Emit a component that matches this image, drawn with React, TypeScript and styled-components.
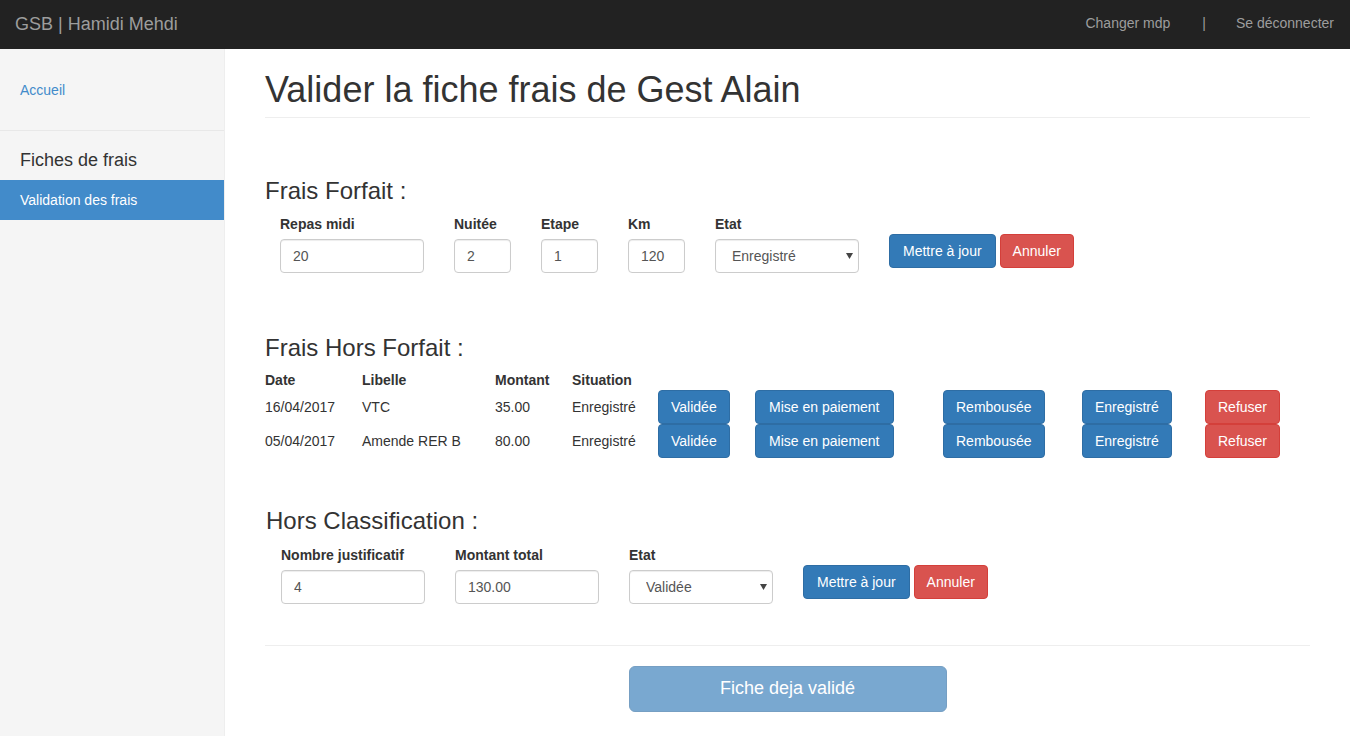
import React from "react";
import styled, { createGlobalStyle } from "styled-components";

const GlobalStyle = createGlobalStyle`
  *, *::before, *::after { box-sizing: border-box; }
  html, body { margin: 0; padding: 0; background: #fff; }
  body {
    font-family: "Liberation Sans", Arial, Helvetica, sans-serif;
    font-size: 14px;
    line-height: 1.42857;
    color: #333;
  }
`;

const Page = styled.div`
  display: flex;
  flex-direction: column;
  min-height: 736px;
`;

const Navbar = styled.header`
  height: 49px;
  background: #222;
  display: flex;
  align-items: center;
  justify-content: space-between;
  padding: 0 16px 0 15px;
  flex-shrink: 0;
`;

const Brand = styled.div`
  font-size: 18px;
  color: #9d9d9d;
  line-height: 20px;
  margin-top: -2px;
`;

const NavLinks = styled.nav`
  display: flex;
  align-items: center;
  color: #9d9d9d;
  font-size: 14px;
  margin-top: -1px;
`;

const NavLink = styled.span`
  color: #9d9d9d;
`;

const NavSep = styled.span`
  color: #9d9d9d;
  margin: 0 30px 0 32px;
`;

const Body = styled.div`
  display: flex;
  flex: 1;
  align-items: stretch;
`;

const Sidebar = styled.aside`
  width: 225px;
  flex-shrink: 0;
  background: #f5f5f5;
  border-right: 1px solid #eee;
  display: flex;
  flex-direction: column;
`;

const SideLinkBlock = styled.div`
  height: 82px;
  padding: 32px 20px 0;
  border-bottom: 1px solid #e8e8e8;
`;

const SideLink = styled.span`
  color: #428bca;
  font-size: 14px;
`;

const SideTitle = styled.div`
  font-size: 18px;
  color: #333;
  padding: 17px 20px 0;
  height: 49px;
  line-height: 24px;
`;

const SideActive = styled.div`
  background: #428bca;
  color: #fff;
  height: 40px;
  width: 224px;
  line-height: 40px;
  padding: 0 20px;
  font-size: 14px;
`;

const Main = styled.main`
  flex: 1;
  padding: 0 40px 0 40px;
`;

const PageHeader = styled.div`
  margin-top: 21px;
  border-bottom: 1px solid #eee;
  padding-bottom: 7px;
`;

const H1 = styled.h1`
  margin: 0;
  font-size: 36px;
  font-weight: 500;
  line-height: 39.6px;
  color: #333;
`;

const H3 = styled.h3<{ $top: number; $indent?: number }>`
  margin: ${(p) => p.$top}px 0 0 ${(p) => p.$indent ?? 0}px;
  font-size: 24px;
  font-weight: 500;
  line-height: 26.4px;
  color: #333;
`;

const FormRow = styled.div<{ $indent: number }>`
  display: flex;
  align-items: flex-start;
  gap: 30px;
  margin-top: 10px;
  padding-left: ${(p) => p.$indent}px;
`;

const Field = styled.div<{ $w: number }>`
  width: ${(p) => p.$w}px;
  display: flex;
  flex-direction: column;
`;

const Label = styled.label`
  font-weight: bold;
  font-size: 14px;
  line-height: 20px;
  margin-bottom: 5px;
  color: #333;
`;

const Input = styled.input`
  height: 34px;
  width: 100%;
  padding: 6px 12px;
  font-family: inherit;
  font-size: 14px;
  color: #555;
  background: #fff;
  border: 1px solid #ccc;
  border-radius: 4px;
  box-shadow: inset 0 1px 1px rgba(0, 0, 0, 0.075);
  outline: none;
`;

const SelectWrap = styled.div`
  position: relative;
  width: 100%;
`;

const Select = styled.select`
  appearance: none;
  -webkit-appearance: none;
  height: 34px;
  width: 100%;
  padding: 6px 12px 6px 16px;
  font-family: inherit;
  font-size: 14px;
  color: #555;
  background: #fff;
  border: 1px solid #ccc;
  border-radius: 4px;
  box-shadow: inset 0 1px 1px rgba(0, 0, 0, 0.075);
  outline: none;
`;

const Arrow = styled.svg`
  position: absolute;
  right: 6px;
  top: 14px;
  width: 7px;
  height: 6px;
  pointer-events: none;
`;

const Actions = styled.div`
  display: flex;
  gap: 4px;
  padding-top: 20px;
`;

const Btn = styled.button<{ $variant: "primary" | "danger"; $wide?: boolean }>`
  height: 34px;
  padding: 6px ${(p) => (p.$wide ? 13 : 12)}px;
  font-family: inherit;
  font-size: 14px;
  line-height: 20px;
  color: #fff;
  border-radius: 4px;
  border: 1px solid ${(p) => (p.$variant === "primary" ? "#2e6da4" : "#d43f3a")};
  background: ${(p) => (p.$variant === "primary" ? "#337ab7" : "#d9534f")};
  white-space: nowrap;
  cursor: pointer;
`;

const Table = styled.div`
  margin-top: 9px;
  display: grid;
  grid-template-columns: 97px 133px 77px 86px 97px 188px 139px 123px 1fr;
`;

const HeadCell = styled.div`
  font-weight: bold;
  height: 20px;
  line-height: 20px;
`;

const Cell = styled.div<{ $text?: boolean }>`
  height: 34px;
  display: flex;
  align-items: center;
  white-space: nowrap;
  padding-top: ${(p) => (p.$text ? 2 : 0)}px;
`;

const Divider = styled.hr`
  margin: 41px 0 0;
  border: 0;
  border-top: 1px solid #eee;
`;

const Footer = styled.div`
  display: flex;
  justify-content: center;
  padding-top: 20px;
  padding-bottom: 20px;
`;

const BigBtn = styled.button`
  width: 318px;
  height: 46px;
  font-family: inherit;
  font-size: 18px;
  color: #fff;
  background: #337ab7;
  border: 1px solid #2e6da4;
  border-radius: 6px;
  opacity: 0.65;
  cursor: not-allowed;
`;

const Caret = () => (
  <Arrow viewBox="0 0 7 6">
    <path d="M0 0 L7 0 L3.5 6 Z" fill="#444" />
  </Arrow>
);

const rows = [
  { date: "16/04/2017", libelle: "VTC", montant: "35.00", situation: "Enregistré" },
  { date: "05/04/2017", libelle: "Amende RER B", montant: "80.00", situation: "Enregistré" },
];

export default function App() {
  return (
    <>
      <GlobalStyle />
      <Page>
        <Navbar>
          <Brand>GSB | Hamidi Mehdi</Brand>
          <NavLinks>
            <NavLink>Changer mdp</NavLink>
            <NavSep>|</NavSep>
            <NavLink>Se déconnecter</NavLink>
          </NavLinks>
        </Navbar>
        <Body>
          <Sidebar>
            <SideLinkBlock>
              <SideLink>Accueil</SideLink>
            </SideLinkBlock>
            <SideTitle>Fiches de frais</SideTitle>
            <SideActive>Validation des frais</SideActive>
          </Sidebar>
          <Main>
            <PageHeader>
              <H1>Valider la fiche frais de Gest Alain</H1>
            </PageHeader>

            <H3 $top={60}>Frais Forfait :</H3>
            <FormRow $indent={15}>
              <Field $w={144}>
                <Label>Repas midi</Label>
                <Input defaultValue="20" />
              </Field>
              <Field $w={57}>
                <Label>Nuitée</Label>
                <Input defaultValue="2" />
              </Field>
              <Field $w={57}>
                <Label>Etape</Label>
                <Input defaultValue="1" />
              </Field>
              <Field $w={57}>
                <Label>Km</Label>
                <Input defaultValue="120" />
              </Field>
              <Field $w={144}>
                <Label>Etat</Label>
                <SelectWrap>
                  <Select defaultValue="Enregistré">
                    <option>Enregistré</option>
                    <option>Validée</option>
                  </Select>
                  <Caret />
                </SelectWrap>
              </Field>
              <Actions>
                <Btn $variant="primary" $wide>Mettre à jour</Btn>
                <Btn $variant="danger">Annuler</Btn>
              </Actions>
            </FormRow>

            <H3 $top={62}>Frais Hors Forfait :</H3>
            <Table>
              <HeadCell>Date</HeadCell>
              <HeadCell>Libelle</HeadCell>
              <HeadCell>Montant</HeadCell>
              <HeadCell>Situation</HeadCell>
              <HeadCell />
              <HeadCell />
              <HeadCell />
              <HeadCell />
              <HeadCell />
              {rows.map((r) => (
                <React.Fragment key={r.date}>
                  <Cell $text>{r.date}</Cell>
                  <Cell $text>{r.libelle}</Cell>
                  <Cell $text>{r.montant}</Cell>
                  <Cell $text>{r.situation}</Cell>
                  <Cell>
                    <Btn $variant="primary">Validée</Btn>
                  </Cell>
                  <Cell>
                    <Btn $variant="primary" $wide>Mise en paiement</Btn>
                  </Cell>
                  <Cell>
                    <Btn $variant="primary">Rembousée</Btn>
                  </Cell>
                  <Cell>
                    <Btn $variant="primary">Enregistré</Btn>
                  </Cell>
                  <Cell>
                    <Btn $variant="danger">Refuser</Btn>
                  </Cell>
                </React.Fragment>
              ))}
            </Table>

            <H3 $top={50} $indent={1}>Hors Classification :</H3>
            <FormRow $indent={16}>
              <Field $w={144}>
                <Label>Nombre justificatif</Label>
                <Input defaultValue="4" />
              </Field>
              <Field $w={144}>
                <Label>Montant total</Label>
                <Input defaultValue="130.00" />
              </Field>
              <Field $w={144}>
                <Label>Etat</Label>
                <SelectWrap>
                  <Select defaultValue="Validée">
                    <option>Enregistré</option>
                    <option>Validée</option>
                  </Select>
                  <Caret />
                </SelectWrap>
              </Field>
              <Actions>
                <Btn $variant="primary" $wide>Mettre à jour</Btn>
                <Btn $variant="danger">Annuler</Btn>
              </Actions>
            </FormRow>

            <Divider />
            <Footer>
              <BigBtn disabled>Fiche deja validé</BigBtn>
            </Footer>
          </Main>
        </Body>
      </Page>
    </>
  );
}
